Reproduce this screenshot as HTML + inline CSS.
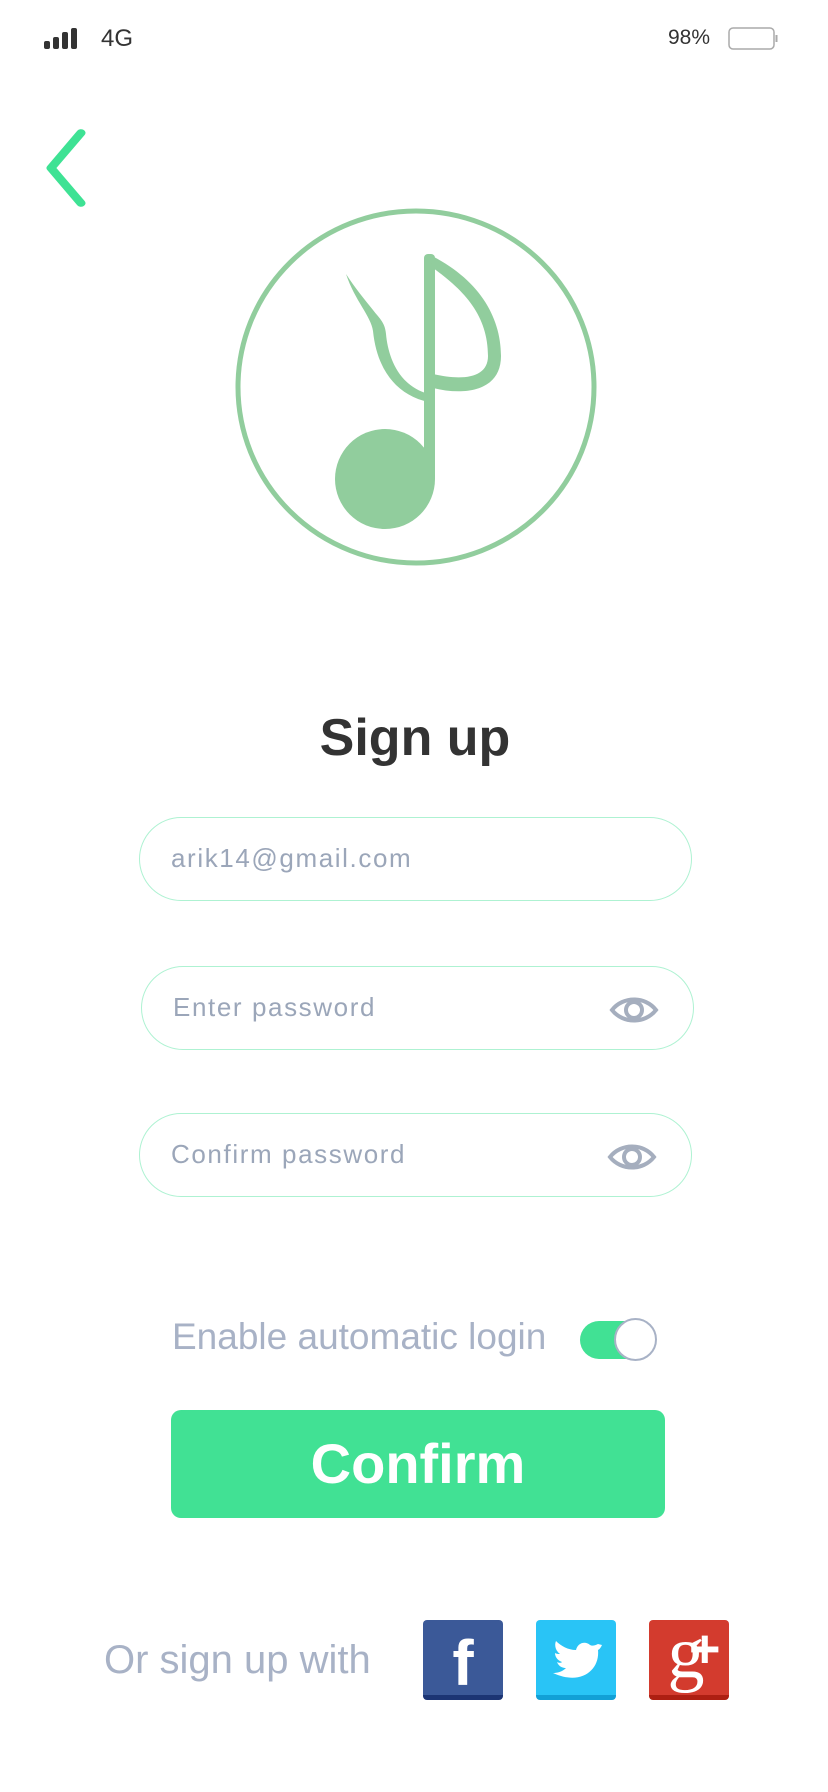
<!DOCTYPE html>
<html><head><meta charset="utf-8"><style>
*{margin:0;padding:0;box-sizing:border-box}
body{width:828px;height:1792px;background:#fff;position:relative;overflow:hidden;font-family:"Liberation Sans",sans-serif}
.abs{position:absolute}
.field{position:absolute;border:1.5px solid #aef2d2;border-radius:43px;height:84px;width:553px}
.field span{position:absolute;left:31px;top:25px;font-size:26px;color:#9ba6b9;letter-spacing:1.6px}
.eye{position:absolute;right:34px;top:28px}
</style></head><body>
<svg class="abs" style="left:44px;top:28px" width="36" height="22"><rect x="0" y="13" width="6" height="8" rx="2" fill="#333"/><rect x="9" y="9" width="6" height="12" rx="2" fill="#333"/><rect x="18" y="4" width="6" height="17" rx="2" fill="#333"/><rect x="27" y="0" width="6" height="21" rx="2" fill="#333"/></svg>
<div class="abs" style="left:101px;top:25px;font-size:24px;color:#333">4G</div>
<div class="abs" style="left:668px;top:26px;font-size:21px;color:#333">98%</div>
<svg class="abs" style="left:728px;top:27px" width="52" height="24"><rect x="1" y="1" width="45" height="21" rx="4" fill="none" stroke="#aaa" stroke-width="1.5"/><rect x="47.5" y="8" width="2" height="7" fill="#aaa"/></svg>
<svg class="abs" style="left:41px;top:128px" width="50" height="80"><path d="M40 6 L10 50 L40 94" transform="scale(1,0.8)" fill="none" stroke="#3ee294" stroke-width="9" stroke-linecap="round" stroke-linejoin="round"/></svg>
<svg class="abs" style="left:233px;top:206px" width="366" height="362" viewBox="0 0 366 362">
<ellipse cx="183" cy="181" rx="178" ry="176" fill="none" stroke="#91cd9d" stroke-width="5"/>
<g fill="#91cd9d">
<rect x="191" y="48" width="11" height="228" rx="4"/>
<circle cx="152" cy="273" r="50"/>
<path d="M195 48 C245 72 268 110 268 150 C268 185 232 190 200 182 L200 168 C230 175 255 172 255 150 C255 110 232 85 200 62 Z"/>
<path d="M196 188 C165 180 155 150 153 128 C152 116 146 112 140 104 C132 94 122 82 113 68 C122 95 138 110 140 125 C144 165 165 190 196 196 Z"/>
</g></svg>
<div class="abs" style="left:0;width:830px;top:708px;text-align:center;font-size:52px;font-weight:bold;color:#333">Sign up</div>
<div class="field" style="left:139px;top:817px"><span>arik14@gmail.com</span></div>
<div class="field" style="left:141px;top:966px"><span>Enter password</span>
<svg class="eye" width="50" height="30"><path d="M3 15 C14 1 36 1 47 15 C36 29 14 29 3 15 Z" fill="none" stroke="#a5aebe" stroke-width="4"/><circle cx="25" cy="15" r="8" fill="none" stroke="#a5aebe" stroke-width="4"/></svg></div>
<div class="field" style="left:139px;top:1113px"><span>Confirm password</span>
<svg class="eye" width="50" height="30"><path d="M3 15 C14 1 36 1 47 15 C36 29 14 29 3 15 Z" fill="none" stroke="#a5aebe" stroke-width="4"/><circle cx="25" cy="15" r="8" fill="none" stroke="#a5aebe" stroke-width="4"/></svg></div>
<div class="abs" style="left:172px;top:1316px;font-size:37px;color:#a8b2c6">Enable automatic login</div>
<div class="abs" style="left:580px;top:1321px;width:76px;height:38px;border-radius:19px;background:#41e194"></div>
<div class="abs" style="left:614px;top:1318px;width:43px;height:43px;border-radius:50%;background:#fff;border:2px solid #a8b2c6"></div>
<div class="abs" style="left:171px;top:1410px;width:494px;height:108px;border-radius:10px;background:#41e194;color:#fff;font-size:56px;font-weight:bold;text-align:center;line-height:108px">Confirm</div>
<div class="abs" style="left:104px;top:1638px;font-size:40px;color:#a8b2c6">Or sign up with</div>
<div class="abs" style="left:423px;top:1620px;width:80px;height:80px;border-radius:4px;background:#3b5998;border-bottom:5px solid #1c3574;color:#fff;font-size:64px;font-weight:bold;text-align:center;line-height:86px">f</div>
<div class="abs" style="left:536px;top:1620px;width:80px;height:80px;border-radius:4px;background:#29c4f6;border-bottom:5px solid #12a0d6">
<svg width="80" height="75" viewBox="0 0 80 75"><path d="M62 24 C58 26 56 26 54 25 C50 21 42 22 40 30 C32 30 25 26 20 21 C18 26 20 31 24 34 C22 34 21 34 19 33 C19 38 23 41 26 42 C25 43 23 43 21 42 C23 47 27 48 30 48 C26 52 21 53 17 53 C45 66 64 50 62 30 C64 29 65 27 66 25 Z" fill="#fff"/></svg></div>
<div class="abs" style="left:649px;top:1620px;width:80px;height:80px;border-radius:4px;background:#d33b2e;border-bottom:5px solid #ad1f12;overflow:hidden;color:#fff;font-family:'Liberation Serif',serif;font-size:74px;line-height:66px">&nbsp;g<span style="position:absolute;left:40px;top:-4px;font-family:'Liberation Sans';font-size:54px;font-weight:bold">+</span></div>
</body></html>
